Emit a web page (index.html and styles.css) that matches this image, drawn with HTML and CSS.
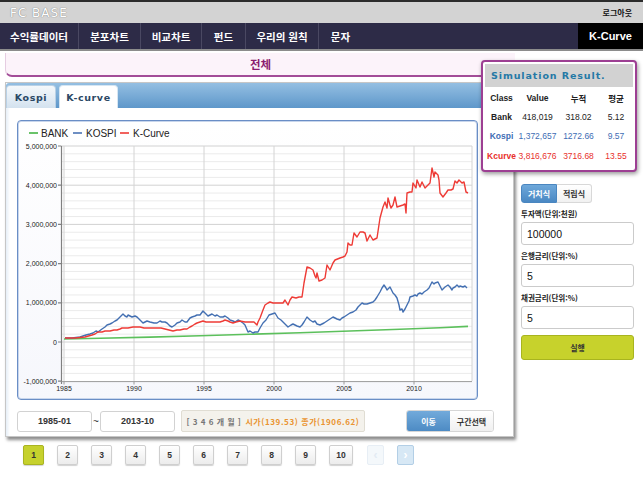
FILE: index.html
```html
<!DOCTYPE html>
<html lang="ko">
<head>
<meta charset="utf-8">
<title>FC BASE - K-Curve</title>
<link rel="stylesheet" href="styles.css">
</head>
<body>
<div class="topbar">
  <span class="logo">FC BASE</span>
  <span class="logout">로그아웃</span>
</div>
<nav class="nav">
  <a class="nav-item w1">수익률데이터</a>
  <a class="nav-item w2">분포차트</a>
  <a class="nav-item w3">비교차트</a>
  <a class="nav-item w4">펀드</a>
  <a class="nav-item w5">우리의 원칙</a>
  <a class="nav-item w6">문자</a>
  <a class="nav-item nav-kcurve">K-Curve</a>
</nav>
<div class="content">
  <div class="left">
    <div class="title-bar">전체</div>
    <div class="panel">
      <div class="tabstrip">
        <div class="tab tab-kospi">Kospi</div>
        <div class="tab tab-kcurve active">K-curve</div>
      </div>
      <div class="panel-body">
        <div class="chart-box">
          <svg class="plot" width="459" height="278" viewBox="18 121 459 278">
            <g class="legend">
              <line x1="29" y1="133" x2="38" y2="133" stroke="#45b545" stroke-width="1.6"/>
              <text x="41" y="136.5">BANK</text>
              <line x1="73" y1="133" x2="82" y2="133" stroke="#4a74b4" stroke-width="1.6"/>
              <text x="86" y="136.5">KOSPI</text>
              <line x1="120" y1="133" x2="129" y2="133" stroke="#ee3b36" stroke-width="1.6"/>
              <text x="133" y="136.5">K-Curve</text>
            </g>
            <rect x="62" y="146" width="410" height="235.2" fill="#ffffff"/>
            <path d="M62 153.84H472M62 161.68H472M62 169.52H472M62 177.36H472M62 193.04H472M62 200.88H472M62 208.72H472M62 216.56H472M62 232.24H472M62 240.08H472M62 247.92H472M62 255.76H472M62 271.44H472M62 279.28H472M62 287.12H472M62 294.96H472M62 310.64H472M62 318.48H472M62 326.32H472M62 334.16H472M62 349.84H472M62 357.68H472M62 365.52H472M62 373.36H472" stroke="#ebebeb" stroke-width="1" fill="none"/>
            <path d="M62 146H472M62 185.2H472M62 224.4H472M62 263.6H472M62 302.8H472M62 342H472" stroke="#d2d2d2" stroke-width="1" fill="none"/>
            <path d="M64 146V381M134 146V381M204 146V381M274 146V381M344 146V381M414 146V381M472 146V381" stroke="#d4d4d4" stroke-width="1" fill="none"/>
            <path d="M61.5 146V384M58 146H61.5M58 185.2H61.5M58 224.4H61.5M58 263.6H61.5M58 302.8H61.5M58 342H61.5M58 381.2H61.5" stroke="#808080" stroke-width="1.2" fill="none"/>
            <path d="M61.5 381.6H472M64 381.6V384.5M134 381.6V384.5M204 381.6V384.5M274 381.6V384.5M344 381.6V384.5M414 381.6V384.5" stroke="#9a9a9a" stroke-width="1" fill="none"/>
            <g class="ylabels">
              <text x="57" y="148.5">5,000,000</text>
              <text x="57" y="187.7">4,000,000</text>
              <text x="57" y="226.9">3,000,000</text>
              <text x="57" y="266.1">2,000,000</text>
              <text x="57" y="305.3">1,000,000</text>
              <text x="57" y="344.5">0</text>
              <text x="57" y="383.7">-1,000,000</text>
            </g>
            <g class="xlabels">
              <text x="64" y="391">1985</text>
              <text x="134" y="391">1990</text>
              <text x="204" y="391">1995</text>
              <text x="274" y="391">2000</text>
              <text x="344" y="391">2005</text>
              <text x="414" y="391">2010</text>
            </g>
            <polyline fill="none" stroke="#5cc05c" stroke-width="1.6" points="64,339 100,338.2 150,337.1 200,335.8 250,334.3 300,332.7 350,331 400,329.3 440,327.7 468,326.4"/>
            <polyline fill="none" stroke="#4470b2" stroke-width="1.4" stroke-linejoin="round" points="65,338 72,338 80,337 86,335 90,334 93,333 96,331 98,332 102,329 105,327 107,325 110,324 112,323 115,321 117,320 120,317 123,314 125,316 127,317 128,315 130,316 132,317 135,316 137,317 140,320 143,323 147,321 150,322 154,323 157,323 160,321 162,322 165,322 167,323 170,326 172,327 175,325 177,323 180,322 182,320 185,322 187,322 190,318 192,317 195,316 197,315 200,315 203,311 205,313 208,316 210,315 212,314 215,316 217,315 220,317 223,317 225,316 228,318 230,320 233,321 235,322 238,320 240,321 243,323 245,325 248,332 250,331 253,333 255,332 258,332 260,328 263,323 266,320 269,315 272,314 275,313 278,318 281,320 283,322 286,325 288,327 291,325 293,324 297,326 300,327 302,325 304,322 307,317 310,320 313,322 315,321 317,324 320,325 322,324 324,323 327,321 330,319 333,317 335,318 337,319 340,320 342,318 344,317 347,315 350,313 353,312 356,310 358,307 360,305 362,303 364,304 367,304 370,303 373,302 375,300 377,297 380,292 382,288 384,285 386,288 387,290 390,287 392,291 393,293 395,295 397,298 399,305 400,310 402,309 403,312 405,309 407,305 409,301 410,297 413,296 415,295 417,296 418,294 420,293 422,294 424,292 427,290 429,288 430,286 432,282 434,284 435,283 438,282 440,286 442,290 444,288 445,287 448,285 450,287 452,290 453,288 455,287 457,285 459,287 460,286 463,287 465,286 467,288"/>
            <polyline fill="none" stroke="#ee3b36" stroke-width="1.4" stroke-linejoin="round" points="65,338 75,338 85,337 92,335 95,334 98,332 102,332 105,331 110,331 114,330 117,330 120,329 122,328 125,328 128,328 133,327 137,327 140,327 144,328 148,328 152,328 157,328 161,328 165,329 169,330 173,331 177,330 180,330 184,329 187,329 190,327 192,326 195,324 197,323 200,322 203,321 206,322 210,322 215,322 220,322 223,321 225,320 228,321 230,322 233,323 236,322 240,321 245,322 250,322 254,322 257,325 258,322 260,318 263,310 265,305 268,303 270,302 273,303 276,303 280,303 283,303 285,300 288,305 290,300 292,297 296,298 299,297 302,297 304,283 307,267 310,268 313,270 315,276 316,278 317,273 319,281 322,280 325,278 327,265 330,270 333,263 335,260 340,258 343,257 345,256 347,252 348,243 350,245 352,245 354,233 357,237 360,232 363,232 365,233 367,241 370,235 373,240 375,239 377,238 380,218 383,207 385,202 387,208 388,198 390,205 391,208 393,205 395,197 397,207 400,206 403,205 405,204 406,213 407,193 410,192 412,192 413,183 416,188 417,180 420,187 422,182 425,188 428,185 430,183 432,168 434,177 435,172 438,175 439,180 440,193 443,197 446,193 448,190 451,190 453,189 455,181 457,183 459,180 462,183 464,182 466,192 468,193"/>
          </svg>
        </div>
        <div class="range">
          <div class="date-input">1985-01</div>
          <span class="tilde">~</span>
          <div class="date-input">2013-10</div>
          <div class="info-box"><span class="months">[ 3 4 6 개 월 ]</span> <span class="prices">시가(139.53) 종가(1906.62)</span></div>
          <div class="seg">
            <div class="seg-btn seg-on">이동</div>
            <div class="seg-btn">구간선택</div>
          </div>
        </div>
      </div>
    </div>
    <div class="pager">
      <div class="page page-on">1</div>
      <div class="page">2</div>
      <div class="page">3</div>
      <div class="page">4</div>
      <div class="page">5</div>
      <div class="page">6</div>
      <div class="page">7</div>
      <div class="page">8</div>
      <div class="page">9</div>
      <div class="page page-wide">10</div>
      <div class="page page-prev">&#8249;</div>
      <div class="page page-next">&#8250;</div>
    </div>
  </div>
  <aside class="side">
    <div class="mode">
      <div class="mode-btn mode-on">거치식</div>
      <div class="mode-btn">적립식</div>
    </div>
    <div class="field-label">투자액(단위:천원)</div>
    <div class="field">100000</div>
    <div class="field-label">은행금리(단위:%)</div>
    <div class="field">5</div>
    <div class="field-label">채권금리(단위:%)</div>
    <div class="field">5</div>
    <div class="run-btn">실행</div>
  </aside>
  <div class="sim">
    <div class="sim-head">Simulation Result.</div>
    <div class="sim-table">
      <span class="th">Class</span><span class="th">Value</span><span class="th">누적</span><span class="th">평균</span>
      <span class="rh">Bank</span><span>418,019</span><span>318.02</span><span>5.12</span>
      <span class="rh kospi">Kospi</span><span class="kospi">1,372,657</span><span class="kospi">1272.66</span><span class="kospi">9.57</span>
      <span class="rh kc">Kcurve</span><span class="kc">3,816,676</span><span class="kc">3716.68</span><span class="kc">13.55</span>
    </div>
  </div>
</div>
</body>
</html>
```

FILE: styles.css
```css
* { box-sizing: border-box; }
html, body { margin: 0; padding: 0; }
body {
  width: 643px;
  height: 482px;
  overflow: hidden;
  background: #ffffff;
  font-family: "Liberation Sans", "Noto Sans CJK KR", sans-serif;
  color: #222;
}

/* top bar */
.topbar {
  height: 23px;
  border-top: 2px solid #2b2b2b;
  background: #d3d3d3;
  display: flex;
  align-items: center;
  justify-content: space-between;
  padding: 0 11px 0 10px;
}
.logo {
  font-family: "DejaVu Sans", sans-serif;
  font-size: 12px;
  letter-spacing: 1px;
  color: #ffffff;
  text-shadow: 0 0 1px #888, 0 0 1px #888;
}
.logout {
  font-family: "Noto Sans CJK KR", sans-serif;
  font-size: 8px;
  font-weight: bold;
  color: #111;
}

/* navigation */
.nav {
  display: flex;
  height: 28px;
  background: #2d2b47;
  border-bottom: 2px solid #8c8c8c;
}
.nav-item {
  display: flex;
  align-items: center;
  justify-content: center;
  color: #ffffff;
  font-family: "Noto Sans CJK KR", sans-serif;
  font-weight: bold;
  font-size: 10.5px;
  border-right: 1px solid #4a4862;
}
.w1 { width: 79px; }
.w2 { width: 62px; }
.w3 { width: 61px; }
.w4 { width: 44px; }
.w5 { width: 73px; }
.w6 { width: 43px; border-right: none; }
.nav-kcurve {
  margin-left: auto;
  width: 65px;
  background: #000000;
  border-right: none;
  font-family: "Liberation Sans", sans-serif;
  font-size: 11px;
}

/* content grid */
.content {
  position: relative;
  display: grid;
  grid-template-columns: 510px 128px;
  padding-left: 5px;
}
.left { display: flex; flex-direction: column; }

.title-bar {
  margin-top: 2px;
  height: 24px;
  background: #fcf3fa;
  border-bottom: 2px solid #a34d98;
  border-left: 1px solid #e6cde2;
  border-radius: 0 0 0 7px;
  display: flex;
  align-items: center;
  justify-content: center;
  font-family: "Noto Sans CJK KR", sans-serif;
  font-weight: bold;
  font-size: 11.5px;
  color: #8a1c6e;
}

/* main panel */
.panel {
  margin-top: 5px;
  width: 509px;
  height: 355px;
  border: 1px solid #c6c6c6;
  background: #ffffff;
  box-shadow: 2px 3px 3px rgba(0, 0, 0, 0.45);
  display: flex;
  flex-direction: column;
}
.tabstrip {
  height: 25px;
  background: linear-gradient(#94bfe2, #5e97ca);
  border-radius: 3px 3px 0 0;
  display: flex;
  align-items: flex-end;
  gap: 3px;
}
.tab {
  height: 23px;
  border-radius: 4px 4px 0 0;
  display: flex;
  align-items: center;
  justify-content: center;
  font-family: "DejaVu Sans", sans-serif;
  font-weight: bold;
  font-size: 9.5px;
  letter-spacing: 0.6px;
  color: #2b4865;
  background: linear-gradient(#f4f8fb, #d3e2ef);
  border: 1px solid #b9d1e6;
  border-bottom: none;
}
.tab-kospi { width: 50px; }
.tab-kcurve { width: 59px; }
.tab.active { background: #ffffff; border-color: #d6e6f3; }

.panel-body {
  flex: 1;
  padding: 12px 19px 0 11px;
  background: linear-gradient(to right, #e5eef7 0, #ffffff 4px);
}
.chart-box {
  width: 461px;
  height: 280px;
  border: 1px solid #6a8ec6;
  border-radius: 4px;
  background: linear-gradient(#ffffff, #f6f7fc);
  box-shadow: inset 0 0 0 1px #c8d6ec;
}
.plot { display: block; }
.plot text {
  font-family: "Liberation Sans", sans-serif;
  fill: #222;
}
.legend text { font-size: 10px; }
.ylabels text { font-size: 7px; text-anchor: end; }
.xlabels text { font-size: 7px; text-anchor: middle; }

/* range row */
.range {
  margin-top: 10px;
  display: flex;
  align-items: center;
  height: 22px;
}
.date-input {
  width: 75px;
  height: 21px;
  border: 1px solid #d2d2d2;
  border-radius: 3px;
  background: #ffffff;
  display: flex;
  align-items: center;
  justify-content: center;
  font-weight: bold;
  font-size: 9px;
  color: #333;
}
.tilde {
  width: 8px;
  text-align: center;
  font-size: 10px;
  color: #333;
}
.info-box {
  margin-left: 6px;
  width: 184px;
  height: 22px;
  background: #f4f2ec;
  border: 1px solid #e0ddd3;
  border-radius: 2px;
  display: flex;
  align-items: center;
  justify-content: center;
  gap: 4px;
  font-family: "Noto Sans CJK KR", sans-serif;
  font-size: 8px;
  font-weight: bold;
}
.months { color: #777; letter-spacing: 0.5px; }
.prices { color: #ea9430; letter-spacing: 0.6px; }
.seg {
  margin-left: auto;
  display: flex;
  height: 22px;
  border: 1px solid #d6d6d6;
  border-radius: 3px;
  overflow: hidden;
}
.seg-btn {
  width: 43px;
  display: flex;
  align-items: center;
  justify-content: center;
  font-family: "Noto Sans CJK KR", sans-serif;
  font-size: 8px;
  font-weight: bold;
  color: #333;
  background: linear-gradient(#ffffff, #f0f0f0);
}
.seg-on {
  color: #ffffff;
  background: linear-gradient(#72aadb, #4d8bc4);
}

/* pager */
.pager {
  margin-top: 8px;
  padding-left: 18px;
  display: flex;
  gap: 13px;
}
.page {
  width: 21px;
  height: 20px;
  border: 1px solid #cfcfcf;
  border-radius: 2px;
  background: linear-gradient(#ffffff, #ececec);
  box-shadow: 0 1px 1px rgba(0, 0, 0, 0.18);
  display: flex;
  align-items: center;
  justify-content: center;
  font-weight: bold;
  font-size: 8.5px;
  color: #333;
}
.page-on {
  background: #c6d12d;
  border-color: #a9b421;
}
.page-wide { width: 24px; }
.page-prev {
  margin-left: 1px;
  width: 17px;
  background: #f4f8fb;
  border-color: #e7eef5;
  box-shadow: none;
  color: #e3ebf3;
  font-size: 12px;
}
.page-next {
  width: 17px;
  background: #d7e8f5;
  border-color: #b3cfe6;
  box-shadow: none;
  color: #ffffff;
  font-size: 12px;
}

/* side panel */
.side {
  padding: 133px 0 0 6px;
  width: 119px;
  display: flex;
  flex-direction: column;
}
.mode { display: flex; height: 19px; }
.mode-btn {
  width: 35px;
  display: flex;
  align-items: center;
  justify-content: center;
  font-family: "Noto Sans CJK KR", sans-serif;
  font-size: 8px;
  font-weight: bold;
  color: #333;
  background: linear-gradient(#ffffff, #f1f1f1);
  border: 1px solid #d8d8d8;
  border-left: none;
  border-radius: 0 3px 3px 0;
}
.mode-on {
  width: 36px;
  color: #ffffff;
  background: linear-gradient(#6ea8da, #4a88c3);
  border: 1px solid #4a86c0;
  border-radius: 3px 0 0 3px;
}
.field-label {
  margin-top: 6px;
  height: 10px;
  line-height: 10px;
  font-family: "Noto Sans CJK KR", sans-serif;
  font-size: 7.5px;
  font-weight: bold;
  color: #222;
}
.field {
  margin-top: 3px;
  height: 23px;
  width: 113px;
  border: 1px solid #cbcbcb;
  border-radius: 3px;
  background: #ffffff;
  display: flex;
  align-items: center;
  padding-left: 5px;
  font-size: 10.5px;
  color: #111;
}
.run-btn {
  margin-top: 6px;
  width: 113px;
  height: 25px;
  border: 1px solid #a8b41f;
  border-radius: 3px;
  background: #c7d22c;
  display: flex;
  align-items: center;
  justify-content: center;
  font-family: "Noto Sans CJK KR", sans-serif;
  font-size: 8px;
  font-weight: bold;
  color: #333;
}

/* simulation popup */
.sim {
  position: absolute;
  left: 481px;
  top: 9px;
  width: 156px;
  height: 112px;
  background: #ffffff;
  border: 2px solid #9d3f93;
  border-radius: 4px;
  box-shadow: 1px 2px 4px rgba(0, 0, 0, 0.4);
  padding: 2px;
}
.sim-head {
  height: 23px;
  background: #d2d2d2;
  display: flex;
  align-items: center;
  padding-left: 6px;
  font-family: "DejaVu Sans", sans-serif;
  font-weight: bold;
  font-size: 9.5px;
  letter-spacing: 0.9px;
  color: #2579a6;
}
.sim-table {
  margin-top: 1px;
  display: grid;
  grid-template-columns: 31px 41px 41px 34px;
  grid-auto-rows: 19.3px;
  padding-left: 1px;
  align-items: center;
  justify-items: center;
  font-size: 8.5px;
  color: #222;
}
.sim-table span { white-space: nowrap; }
.th { font-weight: bold; font-family: "Liberation Sans", "Noto Sans CJK KR", sans-serif; }
.rh { font-weight: bold; }
.kospi { color: #3e6db4; }
.kc { color: #e8302c; }
```
